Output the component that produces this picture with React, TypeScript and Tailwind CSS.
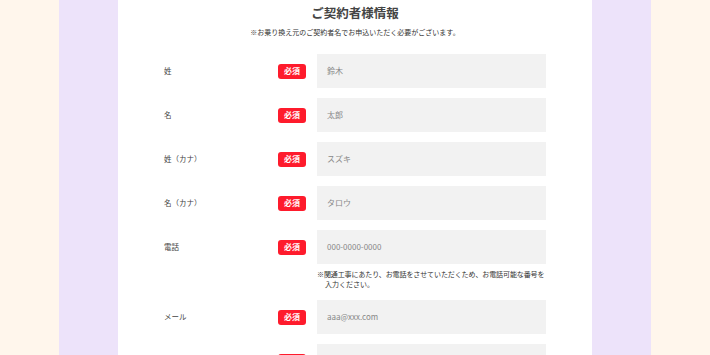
import React from "react";

const font = { fontFamily: '"Noto Sans CJK JP", "Noto Sans", sans-serif' };

type Row = { label: string; placeholder: string; note?: string[] };

const rows: Row[] = [
  { label: "姓", placeholder: "鈴木" },
  { label: "名", placeholder: "太郎" },
  { label: "姓（カナ）", placeholder: "スズキ" },
  { label: "名（カナ）", placeholder: "タロウ" },
  {
    label: "電話",
    placeholder: "000-0000-0000",
    note: ["※関通工事にあたり、お電話をさせていただくため、お電話可能な番号を", "入力ください。"],
  },
  { label: "メール", placeholder: "aaa@xxx.com" },
  { label: "", placeholder: "" },
];

function FormRow({ row }: { row: Row }) {
  return (
    <div className={row.note ? "" : "mb-[10px]"}>
      <div className="flex items-center h-[34px]">
        <div className="w-[114px] text-[7.5px] text-[#444] leading-none">{row.label}</div>
        <div className="w-[28px] h-[15px] rounded-[3px] bg-[#fe1b2c] text-white text-[8px] font-bold flex items-center justify-center leading-none">
          必須
        </div>
        <div className="ml-[11px] w-[229px] h-[34px] bg-[#f2f2f2] flex items-center pl-[10px] text-[8px] text-[#888]">
          {row.placeholder}
        </div>
      </div>
      {row.note && (
        <div className="ml-[153px] mt-[5px] mb-[11px] w-[240px] text-[7px] leading-[10px] text-[#333] whitespace-nowrap">
          <div className="tracking-[-0.1px]">{row.note[0]}</div>
          <div className="pl-[8px]">{row.note[1]}</div>
        </div>
      )}
    </div>
  );
}

export default function App() {
  return (
    <div style={font} className="w-[710px] h-[355px] overflow-hidden flex justify-center bg-[#fff6ec]">
      <div className="w-[592px] h-full bg-[#ede3fa] px-[59px]">
        <div className="w-[474px] h-full bg-white px-[46px] pt-[3px]">
          <h1 className="text-center text-[12.5px] font-bold leading-[20px] text-[#444]">ご契約者様情報</h1>
          <p className="text-center text-[7px] leading-[10px] text-[#333] mt-[4px] mb-[17px]">
            ※お乗り換え元のご契約者名でお申込いただく必要がございます。
          </p>
          {rows.map((r, i) => (
            <FormRow key={i} row={r} />
          ))}
        </div>
      </div>
    </div>
  );
}
